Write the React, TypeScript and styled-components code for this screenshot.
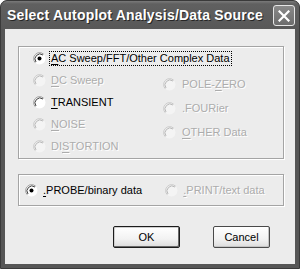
import React from "react";
import styled, { createGlobalStyle } from "styled-components";

const Global = createGlobalStyle`
  html, body { margin: 0; padding: 0; background: #ffffff; }
  #root { width: 300px; height: 269px; }
`;

const Window = styled.div`
  width: 300px;
  height: 269px;
  box-sizing: border-box;
  background: #565656;
  border-radius: 7px 7px 0 0;
  border: 1px solid #3a3a3a;
  display: flex;
  flex-direction: column;
  padding: 0 4px 4px 4px;
  font-family: "Liberation Sans", Arial, sans-serif;
  font-size: 11px;
  color: #000;
  overflow: hidden;
`;

const TitleBar = styled.div`
  height: 28px;
  flex: none;
  display: flex;
  align-items: center;
  justify-content: space-between;
  background: linear-gradient(#7a7a7a 0px, #606060 3px, #585858 100%);
  margin: 0 -4px;
  padding-left: 6px;
  padding-right: 4px;
  border-radius: 6px 6px 0 0;
`;

const Title = styled.span`
  font-family: "Liberation Sans", Arial, sans-serif;
  font-weight: bold;
  font-size: 14px;
  color: #ffffff;
  text-shadow: 1px 1px 0 #262626;
  letter-spacing: 0.2px;
`;

const CloseBtn = styled.div`
  width: 20px;
  height: 19px;
  border: 1px solid #e6e6e6;
  border-radius: 3px;
  background: linear-gradient(#8a8a8a, #6c6c6c);
  display: flex;
  align-items: center;
  justify-content: center;
  margin-top: 1px;
`;

const Client = styled.div`
  flex: 1;
  background: #ececec;
  display: flex;
  flex-direction: column;
  padding: 17px 11px 0 13px;
`;

const Group = styled.div<{ $h: number }>`
  box-sizing: border-box;
  height: ${(p) => p.$h}px;
  border: 1px solid #a4a4a4;
  box-shadow: inset 1px 1px 0 #ffffff, 1px 1px 0 #ffffff;
`;

const Spacer = styled.div`
  height: 15px;
  flex: none;
`;

const MainGrid = styled.div`
  display: grid;
  grid-template-columns: 130px 1fr;
  padding-left: 14px;
`;

const Column = styled.div<{ $top: number; $row: number }>`
  display: flex;
  flex-direction: column;
  padding-top: ${(p) => p.$top}px;
  & > * { height: ${(p) => p.$row}px; }
`;

const Row = styled.div<{ $gap?: number }>`
  display: flex;
  align-items: center;
  gap: ${(p) => p.$gap ?? 4}px;
`;

const Label = styled.span<{ $disabled?: boolean; $focus?: boolean }>`
  color: ${(p) => (p.$disabled ? "#acacac" : "#000")};
  text-shadow: ${(p) => (p.$disabled ? "1px 1px 0 #ffffff" : "none")};
  white-space: nowrap;
  padding: 0 1px;
  outline: ${(p) => (p.$focus ? "1px dotted #000" : "none")};
  line-height: 13px;
  & u { text-decoration: underline; text-underline-offset: 2px; }
`;

const SourceRow = styled.div`
  display: flex;
  align-items: center;
  height: 100%;
  padding-left: 6px;
`;

const SourceItem = styled.div<{ $w: number }>`
  width: ${(p) => p.$w}px;
  display: flex;
  align-items: center;
  gap: 4px;
`;

const Buttons = styled.div`
  display: flex;
  gap: 33px;
  padding-left: 95px;
  margin-top: 20px;
`;

const Button = styled.div<{ $w: number; $default?: boolean }>`
  box-sizing: border-box;
  width: ${(p) => p.$w}px;
  height: 22px;
  display: flex;
  align-items: center;
  justify-content: center;
  border: 1px solid ${(p) => (p.$default ? "#1c1c1c" : "#4a4a4a")};
  border-radius: 2px;
  background: linear-gradient(#ffffff, #f2f2f2 60%, #dcdcdc);
  box-shadow: ${(p) =>
    p.$default ? "inset -1px -1px 0 #6a6a6a, inset 1px 1px 0 #cfcfcf" : "inset -1px -1px 0 #c4c4c4"};
  font-size: 11px;
`;

const Radio: React.FC<{ checked?: boolean; disabled?: boolean }> = ({ checked, disabled }) => (
  <svg width="13" height="13" viewBox="0 0 13 13" style={{ flex: "none" }}>
    <circle cx="6.5" cy="6.5" r="6" fill={disabled ? "#f4f4f4" : "#ffffff"} />
    <path d="M 2.26 10.74 A 6 6 0 0 1 10.74 2.26" fill="none" stroke={disabled ? "#c8c8c8" : "#9a9a9a"} strokeWidth="1" />
    <path d="M 3 10 A 5 5 0 0 1 10 3" fill="none" stroke={disabled ? "#b8b8b8" : "#404040"} strokeWidth="1" />
    {checked && <circle cx="6.5" cy="6.5" r="2" fill="#000" />}
  </svg>
);

type Item = { label: React.ReactNode; checked?: boolean; disabled?: boolean; focus?: boolean };

const left: Item[] = [
  { label: <><u>A</u>C Sweep/FFT/Other Complex Data</>, checked: true, focus: true },
  { label: <><u>D</u>C Sweep</>, disabled: true },
  { label: <><u>T</u>RANSIENT</> },
  { label: <><u>N</u>OISE</>, disabled: true },
  { label: <>DI<u>S</u>TORTION</>, disabled: true },
];

const right: Item[] = [
  { label: <>POLE-<u>Z</u>ERO</>, disabled: true },
  { label: <>.FOURier</>, disabled: true },
  { label: <><u>O</u>THER Data</>, disabled: true },
];

export default function App() {
  return (
    <>
      <Global />
      <Window>
        <TitleBar>
          <Title>Select Autoplot Analysis/Data Source</Title>
          <CloseBtn>
            <svg width="12" height="12" viewBox="0 0 12 12">
              <path d="M1.5 1.5 L10.5 10.5 M10.5 1.5 L1.5 10.5" stroke="#ffffff" strokeWidth="2.2" strokeLinecap="square" />
            </svg>
          </CloseBtn>
        </TitleBar>
        <Client>
          <Group $h={113}>
            <MainGrid>
              <Column $top={0} $row={22}>
                {left.map((it, i) => (
                  <Row key={i}>
                    <Radio checked={it.checked} disabled={it.disabled} />
                    <Label $disabled={it.disabled} $focus={it.focus}>{it.label}</Label>
                  </Row>
                ))}
              </Column>
              <Column $top={25} $row={24}>
                {right.map((it, i) => (
                  <Row key={i} $gap={5}>
                    <Radio checked={it.checked} disabled={it.disabled} />
                    <Label $disabled={it.disabled}>{it.label}</Label>
                  </Row>
                ))}
              </Column>
            </MainGrid>
          </Group>
          <Spacer />
          <Group $h={32}>
            <SourceRow>
              <SourceItem $w={143}>
                <Radio checked />
                <Label><u>.</u>PROBE/binary data</Label>
              </SourceItem>
              <SourceItem $w={120}>
                <Radio disabled />
                <Label $disabled><u>.</u>PRINT/text data</Label>
              </SourceItem>
            </SourceRow>
          </Group>
          <Buttons>
            <Button $w={67} $default>OK</Button>
            <Button $w={57}>Cancel</Button>
          </Buttons>
        </Client>
      </Window>
    </>
  );
}
